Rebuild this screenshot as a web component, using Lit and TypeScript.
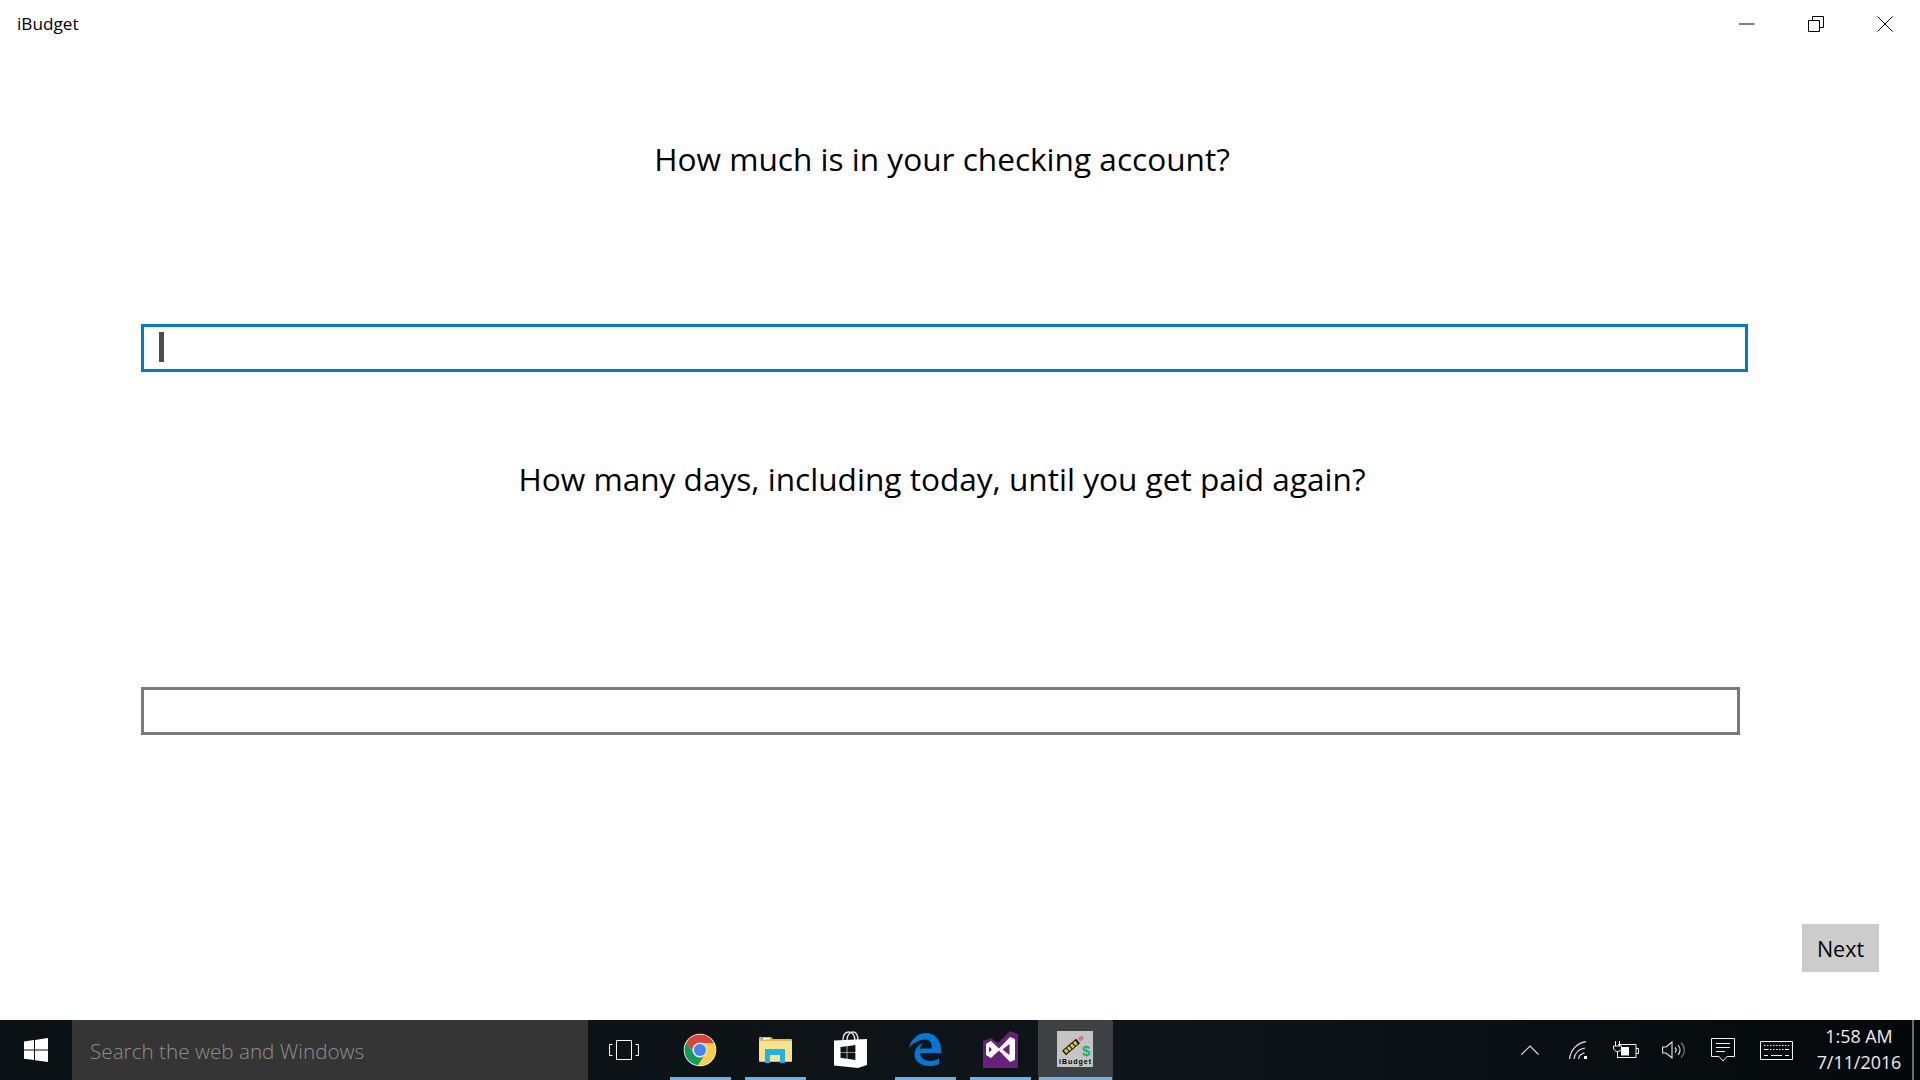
import { LitElement, html, css, svg } from "lit";
import { customElement } from "lit/decorators.js";

const winLogo = (fill: string) => svg`<path fill=${fill} d="M0 3.4 10 2v9.6H0zM11 1.9 24 0v11.6H11zM0 12.6h10V22L0 20.7zM11 12.6h13V24l-13-1.8z"/>`;

@customElement("app-root")
export class AppRoot extends LitElement {
  static styles = css`
    :host { display: block; width: 1920px; height: 1080px; overflow: hidden; background: #fff; font-family: "Open Sans", "Noto Sans", sans-serif; color: #000; }
    .page { display: flex; flex-direction: column; height: 1080px; }
    .titlebar { height: 48px; display: flex; align-items: center; justify-content: space-between; padding-left: 17px; flex: none; }
    .app-title { font-size: 17.2px; margin-top: -1px; }
    .winbtns { display: flex; padding-right: 1px; }
    .winbtn { width: 69px; height: 48px; display: flex; align-items: center; justify-content: center; }
    .main { flex: 1; display: flex; flex-direction: column; padding-left: 141px; }
    h2 { margin: 0; font-weight: 400; font-size: 31.6px; line-height: 44px; text-align: center; width: 1602px; white-space: nowrap; }
    .q1 { margin-top: 89px; }
    .q2 { margin-top: 85px; }
    .field { height: 48px; box-sizing: border-box; border: 3px solid #7a7a7a; display: flex; align-items: center; padding-left: 15px; }
    .f1 { width: 1607px; margin-top: 143px; border-color: #0078d7; }
    .f2 { width: 1599px; margin-top: 186px; }
    .caret { width: 5px; height: 30px; margin-bottom: 2px; background: #4d4d4d; }
    .next { align-self: flex-end; margin: 189px 41px 0 0; width: 77px; height: 48px; display: flex; align-items: center; justify-content: center; background: #ccc; font-size: 21.5px; }
    .taskbar { height: 60px; flex: none; display: flex; align-items: stretch; color: #fff; background: linear-gradient(90deg, #0a1216 0%, #0c1417 35%, #0f1518 60%, #090f12 80%, #05080b 100%); }
    .start { width: 72px; display: flex; align-items: center; justify-content: center; }
    .search { width: 516px; box-sizing: border-box; padding-left: 18px; padding-top: 1px; background: #353535; color: #8e8e8e; font-size: 20.7px; font-weight: 300; display: flex; align-items: center; }
    .cell { width: 75px; box-sizing: border-box; padding-right: 1px; position: relative; display: flex; align-items: center; justify-content: center; }
    .cell.tv { padding-right: 4px; }
    .cell.running::after { content: ""; position: absolute; left: 7px; right: 7px; bottom: 0; height: 3px; background: #6cb2eb; }
    .cell.active { background: #3e4143; }
    .cell.active::after { left: 1px; right: 1px; }
    .tile { width: 36px; height: 36px; background: #c4c4c4; display: block; }
    .tile-text { font-family: "Liberation Sans", sans-serif; font-size: 7px; font-weight: 700; }
    .tile-dollar { font-family: "Liberation Sans", sans-serif; font-size: 15px; font-weight: 700; }
    .tray { margin-left: auto; display: flex; align-items: stretch; }
    .t { display: flex; align-items: center; justify-content: center; }
    .w47 { width: 47px; } .w48 { width: 48px; } .w49 { width: 49px; } .w50 { width: 50px; } .w56 { width: 56px; }
    .clock { width: 108px; padding-left: 2px; box-sizing: border-box; display: flex; flex-direction: column; align-items: center; justify-content: center; gap: 5px; font-size: 17.9px; line-height: 21px; color: #eee; }
    .clock span:first-child { margin-top: -1px; }
    .desk { width: 8px; display: flex; justify-content: flex-start; }
    .desk i { display: block; width: 2px; background: #6a6d6e; }
    svg { display: block; }
    .up1 { margin-top: -2px; }
  `;

  render() {
    return html`<div class="page">
      <header class="titlebar">
        <span class="app-title">iBudget</span>
        <div class="winbtns">
          <div class="winbtn"><svg width="16" height="16" viewBox="0 0 16 16"><path d="M0 8h15.5" stroke="#000" fill="none"/></svg></div>
          <div class="winbtn"><svg width="16" height="16" viewBox="0 0 16 16" fill="none" stroke="#000"><path d="M.5 4.5h11v11H.5zM4.5 4V.5h11v11H12"/></svg></div>
          <div class="winbtn"><svg width="16" height="16" viewBox="0 0 16 16" fill="none" stroke="#000"><path d="M.5.5l15 15M15.5.5l-15 15"/></svg></div>
        </div>
      </header>
      <main class="main">
        <h2 class="q1">How much is in your checking account?</h2>
        <div class="field f1"><span class="caret"></span></div>
        <h2 class="q2">How many days, including today, until you get paid again?</h2>
        <div class="field f2"></div>
        <div class="next">Next</div>
      </main>
      <footer class="taskbar">
        <div class="start"><svg width="24" height="24" viewBox="0 0 24 24">${winLogo("#fff")}</svg></div>
        <div class="search">Search the web and Windows</div>
        <div class="cell tv"><svg width="30" height="20" viewBox="0 0 30 20" fill="none" stroke="#fff"><path d="M7.5.5h15v19h-15zM3.5 4.5H.5v11h3M26.5 4.5h3v11h-3"/></svg></div>
        <div class="cell running"><svg width="34" height="34" viewBox="0 0 48 48">
          <circle cx="24" cy="24" r="23" fill="#fff"/>
          <path fill="#db4437" d="M24 14h19.6A22 22 0 0 0 5 13l9.5 15.5A10 10 0 0 1 24 14z"/>
          <path fill="#0f9d58" d="M5 13a22 22 0 0 0 16 32.8l10-14.5A10 10 0 0 1 14.5 28z"/>
          <path fill="#ffcd40" d="M43.6 14H24a10 10 0 0 1 8.7 15L21 45.8A22 22 0 0 0 43.6 14z"/>
          <circle cx="24" cy="24" r="10.5" fill="#d6e4fb"/><circle cx="24" cy="24" r="8.5" fill="#4285f4"/>
        </svg></div>
        <div class="cell running"><svg class="up1" width="33" height="27" viewBox="0 0 33 27">
          <path fill="#e8b94c" d="M0 2a1 1 0 0 1 1-1h11l2 2h18a1 1 0 0 1 1 1v21a1 1 0 0 1-1 1H1a1 1 0 0 1-1-1z"/>
          <path fill="#fbe08e" d="M0 5h33v19a1 1 0 0 1-1 1H1a1 1 0 0 1-1-1z"/>
          <path fill="#fff" d="M2 2h8v1.5H2z"/><path fill="#29a9e0" d="M2 2h2v1.5H2z"/>
          <path fill="#1fb4e8" d="M6 27V13h20v14h-5v-8h-10v8z"/>
        </svg></div>
        <div class="cell"><svg class="up1" width="33" height="37" viewBox="0 0 33 37">
          <path fill="none" stroke="#ddd" stroke-width="1.4" d="M9 9C9 3 12 1 15 1s6 3 6 9M13 9c0-5 3-8 6-8s5 3 5 9"/>
          <path fill="#fff" d="M0 9.500 33 8v26l-9 3-24-2.500z"/>
          <g transform="translate(6.500 14) scale(.62)"><path fill="#0d1417" d="M0 3.400 10 2v9.600H0zM11 1.900 24 0v11.600H11zM0 12.600h10V22L0 20.700zM11 12.600h13V24l-13-1.800z"/></g>
        </svg></div>
        <div class="cell running"><svg class="up1" width="32" height="33" viewBox="0 0 32 33"><path fill="#0078d7" d="M0 15C2 6 9 0 17 0c9 0 15 7 15 18v2H11c.5 5 5 8 10 8 4 0 7-1 9-3v6c-3 1.500-6 2-10 2-9 0-15-6-14.500-12 .5-5 3.500-9 8.500-11-2 2-3 4-3 5.500h12c0-5.500-2-9-6.500-9C10 6.500 4 10 0 15z"/></svg></div>
        <div class="cell running"><svg class="up1" width="35" height="37" viewBox="0 0 35 37">
          <path fill="#68217a" d="M0 10 8 7l7 5L27 0l8 3v34H0z"/>
          <path fill="#fff" d="M3 13l5-3 8 7.500L27 6l5 2v21l-5 2-11-11.500-8 7.500-5-3zM6 15.500v6l3-3zM26.500 13l-7 5.500 7 5.500z"/>
        </svg></div>
        <div class="cell running active"><svg class="tile up1" viewBox="0 0 36 36">
          <path stroke="#111" stroke-width="6" d="M7 22 21 10"/>
          <path stroke="#d9cb1e" stroke-width="4" stroke-dasharray="3 1" d="M8 21 20 11"/>
          <path stroke="#c97a92" stroke-width="4" d="M22 9l4-3"/>
          <text x="25" y="25" fill="#19b35a" class="tile-dollar">$</text>
          <text x="2" y="33" class="tile-text" fill="#000" textLength="32">iBudget</text>
        </svg></div>
        <div class="tray">
          <div class="t w48"><svg width="18" height="10" viewBox="0 0 18 10" fill="none" stroke="#ddd" stroke-width="1.200"><path d="M.5 9.500 9 1l8.500 8.500"/></svg></div>
          <div class="t w48"><svg width="18" height="18" viewBox="0 0 18 18" fill="none" stroke="#e6e6e6" stroke-width="1.200"><path d="M.6 18C1.500 9 8 2 17 .6M5 18c.8-6 5-10 11-11M9.500 18c.5-3 3-5.500 6-6"/><path d="M15 15h3v3h-3z" fill="#fff" stroke="none"/></svg></div>
          <div class="t w47"><svg width="26" height="18" viewBox="0 0 26 18" fill="none" stroke="#f0f0f0"><path d="M2.500 5V0M6.500 5V0M.5 5h8v2c0 2-2 3.500-4 3.500S.5 9 .5 7zM4.500 10.500V17"/><path d="M5 3.500h18v13H5M23 7.500h2.500v5H23"/><path fill="#fff" stroke="none" d="M8 6h8v8.500H8z"/></svg></div>
          <div class="t w49"><svg width="23" height="18" viewBox="0 0 23 18" fill="none" stroke="#e6e6e6" stroke-width="1.100"><path d="M.6 6v6h3.500L10 17V1L4.100 6z"/><path d="M13 6.500c1.500 1.500 1.500 3.500 0 5M16 4c2.500 3 2.500 7 0 10"/><path stroke="#777" d="M19 1.500c4.500 4.500 4.500 10.500 0 15"/></svg></div>
          <div class="t w50"><svg width="24" height="24" viewBox="0 0 24 24" fill="none" stroke="#f0f0f0"><path d="M.5.5h23v18H16L12 23l-4-4.500H.5z"/><path d="M5 5.500h14M5 9.500h14M5 13.500h9"/></svg></div>
          <div class="t w56"><svg width="33" height="19" viewBox="0 0 33 19" fill="none" stroke="#f0f0f0"><path d="M.5.500h32v18H.5z"/><path stroke-dasharray="1.500 1.500" d="M4 4.500h25M4 8.500h25"/><path d="M4 8.500h3M26 8.500h3"/><path d="M4 14.500h4M11 14.500h11M25 14.500h4"/></svg></div>
          <div class="clock"><span>1:58 AM</span><span>7/11/2016</span></div>
          <div class="desk"><i></i></div>
        </div>
      </footer>
    </div>`;
  }
}
